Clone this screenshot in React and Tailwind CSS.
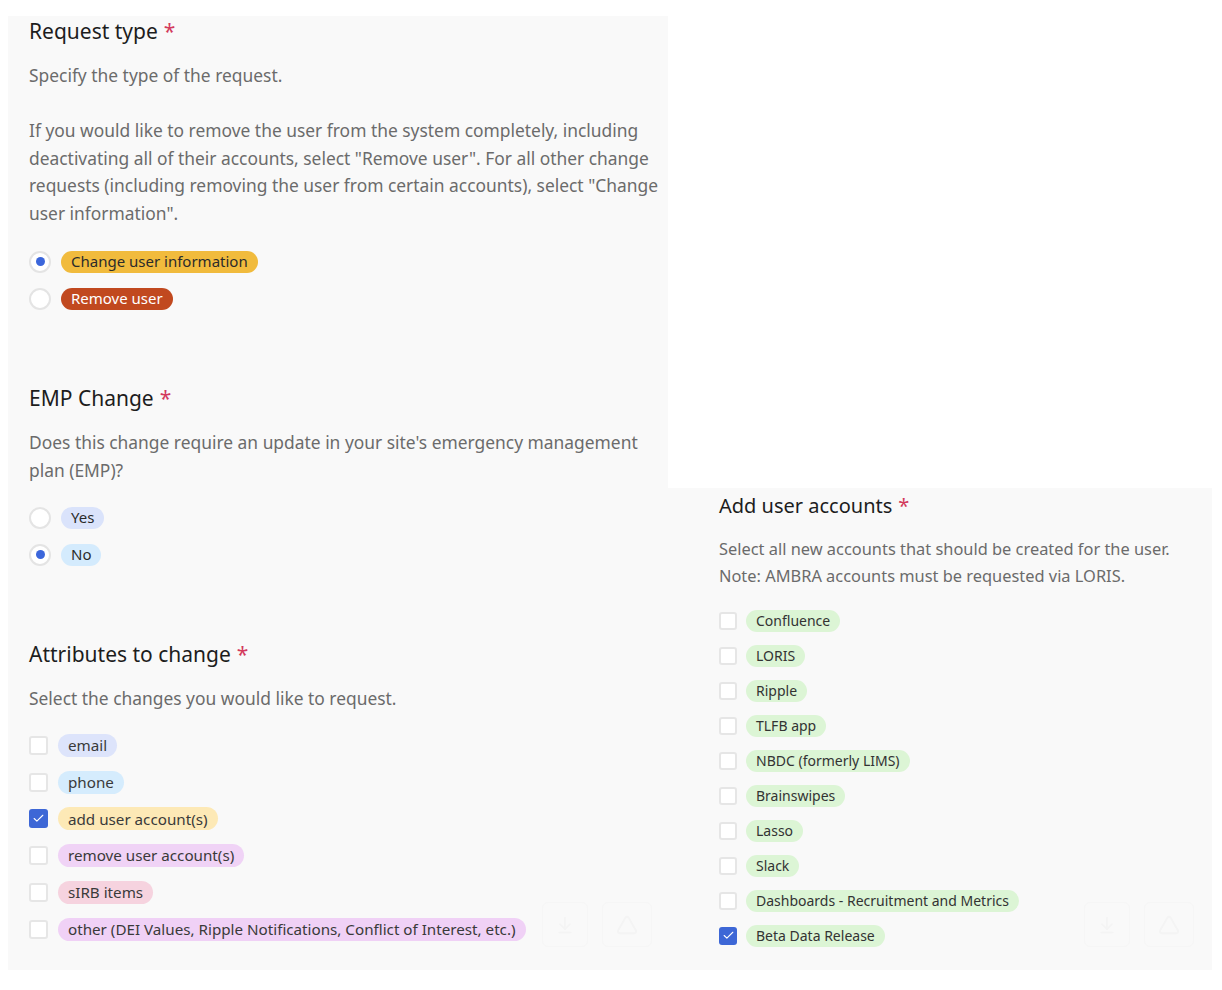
import React from "react";
import { Check, ArrowDownToLine, Triangle } from "lucide-react";

const font = { fontFamily: '"Noto Sans", "Liberation Sans", sans-serif' };

function Heading({ children, small }) {
  return (
    <h2
      className={
        small
          ? "text-[20px] leading-[28px] text-[#1d1d1d]"
          : "text-[21px] leading-[30px] text-[#1d1d1d]"
      }
    >
      {children}
      <span className="ml-[6px] text-[#d33a5c]">*</span>
    </h2>
  );
}

function Radio({ checked }) {
  return (
    <span className="flex h-[22px] w-[22px] shrink-0 items-center justify-center rounded-full border-2 border-[#e4e4e4] bg-white">
      {checked && <span className="h-[9px] w-[9px] rounded-full bg-[#3b66db]" />}
    </span>
  );
}

function Box({ checked, small }) {
  const size = small ? "h-[18px] w-[18px]" : "h-[19px] w-[19px]";
  return checked ? (
    <span
      className={`flex ${size} shrink-0 items-center justify-center rounded-[3px] bg-[#3d67d6]`}
    >
      <Check size={13} strokeWidth={2} className="text-white" />
    </span>
  ) : (
    <span
      className={`${size} shrink-0 rounded-[3px] border-2 border-[#e6e6e6] bg-white`}
    />
  );
}

function Pill({ children, className }) {
  return (
    <span
      className={`inline-flex h-[22px] items-center rounded-full px-[10px] whitespace-nowrap ${className}`}
    >
      {children}
    </span>
  );
}

function Ghost() {
  return (
    <div className="pointer-events-none flex gap-[14px]">
      <div className="flex h-[45px] w-[46px] items-center justify-center rounded-[6px] border border-[#f6f6f6]">
        <ArrowDownToLine size={20} className="text-[#f4f4f4]" />
      </div>
      <div className="flex h-[45px] w-[50px] items-center justify-center rounded-[6px] border border-[#f6f6f6]">
        <Triangle size={22} className="text-[#f4f4f4]" />
      </div>
    </div>
  );
}

const attributes = [
  { label: "email", color: "bg-[#dde4fb]" },
  { label: "phone", color: "bg-[#d5ecfd]" },
  { label: "add user account(s)", color: "bg-[#fde9b6]", checked: true },
  { label: "remove user account(s)", color: "bg-[#f0d3f6]" },
  { label: "sIRB items", color: "bg-[#f6d3df]" },
  {
    label: "other (DEI Values, Ripple Notifications, Conflict of Interest, etc.)",
    color: "bg-[#f0d1f6]",
  },
];

const accounts = [
  "Confluence",
  "LORIS",
  "Ripple",
  "TLFB app",
  "NBDC (formerly LIMS)",
  "Brainswipes",
  "Lasso",
  "Slack",
  "Dashboards - Recruitment and Metrics",
  "Beta Data Release",
];

export default function App() {
  return (
    <div className="flex h-[990px] w-[1222px] items-start bg-white" style={font}>
      {/* Left panel */}
      <div className="relative mt-[16px] ml-[8px] h-[954px] w-[660px] shrink-0 bg-[#f9f9f9] pl-[21px]">
        <Heading>Request type</Heading>
        <div className="mt-[16px] text-[17.4px] leading-[27.5px] text-[#6b6b6b]">
          Specify the type of the request.
          <br />
          <br />
          If you would like to remove the user from the system completely, including
          <br />
          deactivating all of their accounts, select "Remove user". For all other change
          <br />
          requests (including removing the user from certain accounts), select "Change
          <br />
          user information".
        </div>

        <div className="mt-[16px] flex flex-col">
          <div className="flex h-[37px] items-center gap-[10px]">
            <Radio checked />
            <Pill className="bg-[#f1bb3d] text-[15px] text-[#2b2b2b]">
              Change user information
            </Pill>
          </div>
          <div className="flex h-[37px] items-center gap-[10px]">
            <Radio />
            <Pill className="bg-[#c1491f] text-[15px] text-white">Remove user</Pill>
          </div>
        </div>

        <div className="mt-[66px]">
          <Heading>EMP Change</Heading>
        </div>
        <div className="mt-[15px] text-[17.4px] leading-[28px] text-[#6b6b6b]">
          Does this change require an update in your site's emergency management
          <br />
          plan (EMP)?
        </div>
        <div className="mt-[15px] flex flex-col">
          <div className="flex h-[37px] items-center gap-[10px]">
            <Radio />
            <Pill className="bg-[#dae3fb] text-[15px] text-[#2b2b2b]">Yes</Pill>
          </div>
          <div className="flex h-[37px] items-center gap-[10px]">
            <Radio checked />
            <Pill className="bg-[#d4ebfd] text-[15px] text-[#2b2b2b]">No</Pill>
          </div>
        </div>

        <div className="mt-[66px]">
          <Heading>Attributes to change</Heading>
        </div>
        <div className="mt-[15px] text-[17.4px] leading-[28px] text-[#6b6b6b]">
          Select the changes you would like to request.
        </div>
        <div className="mt-[15px] flex flex-col">
          {attributes.map((a) => (
            <div key={a.label} className="flex h-[36.8px] items-center gap-[10px]">
              <Box checked={a.checked} />
              <Pill className={`${a.color} h-[23px] text-[15.2px] text-[#3a3a3a]`}>
                {a.label}
              </Pill>
            </div>
          ))}
        </div>

        <div className="absolute top-[886px] left-[534px]">
          <Ghost />
        </div>
      </div>

      {/* Right panel */}
      <div className="relative mt-[488px] h-[482px] w-[544px] shrink-0 bg-[#f9f9f9] pt-[4px] pl-[51px]">
        <Heading small>Add user accounts</Heading>
        <div className="mt-[15px] text-[16.4px] leading-[27px] text-[#6b6b6b]">
          Select all new accounts that should be created for the user.
          <br />
          Note: AMBRA accounts must be requested via LORIS.
        </div>
        <div className="mt-[14px] flex flex-col">
          {accounts.map((a) => (
            <div key={a} className="flex h-[35px] items-center gap-[9px]">
              <Box small checked={a === "Beta Data Release"} />
              <Pill className="h-[21px] bg-[#dcf5d5] text-[14px] text-[#333]">{a}</Pill>
            </div>
          ))}
        </div>

        <div className="absolute top-[414px] left-[416px]">
          <Ghost />
        </div>
      </div>
    </div>
  );
}
